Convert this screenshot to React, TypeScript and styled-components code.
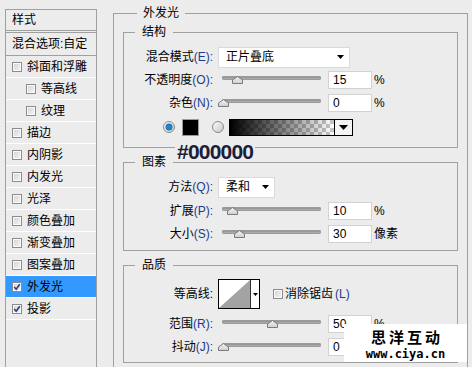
import React from 'react';
import styled, { createGlobalStyle } from 'styled-components';

const GlobalStyle = createGlobalStyle`
	html, body {
		margin: 0;
		padding: 0;
		background: #ececec;
		overflow: hidden;
	}
	body {
		font-family: "Liberation Sans", "Noto Sans CJK SC", sans-serif;
		font-size: 12px;
		color: #000;
	}
`;

const PageStyleC = styled.div`
	position: relative;
	display: flex;
	align-items: flex-start;
	width: 472px;
	height: 367px;
	box-sizing: border-box;
	padding: 5px 0 0 5px;
	overflow: hidden;
`;

/* ---------- left list ---------- */

const SidebarStyleC = styled.div`
	flex-shrink: 0;
	margin-top: 4px;
	width: 92px;
	height: 380px;
	box-sizing: border-box;
	border: 1px solid #a0a0a0;
	line-height: 16px;
`;

const SideHeaderStyleC = styled.div`
	height: 20px;
	line-height: 20px;
	padding-left: 6px;
	border-bottom: 3px double #a0a0a0;
`;

const SideBlendStyleC = styled.div`
	height: 22px;
	line-height: 22px;
	padding-left: 6px;
	border-bottom: 1px solid #a0a0a0;
	white-space: nowrap;
	overflow: hidden;
`;

const SideItemStyleC = styled.div<{ $indent?: boolean; $active?: boolean }>`
	display: flex;
	align-items: center;
	gap: 5px;
	height: 21px;
	padding-left: ${(p) => (p.$indent ? 20 : 6)}px;
	border-bottom: 1px solid #fff;
	background: ${(p) => (p.$active ? '#3399ff' : 'transparent')};
	white-space: nowrap;
`;

const CheckBoxStyleC = styled.span`
	display: inline-flex;
	align-items: center;
	justify-content: center;
	flex-shrink: 0;
	width: 10px;
	height: 10px;
	box-sizing: border-box;
	border: 1px solid #8c8c8c;
	box-shadow: inset 0 0 0 1px #fafafa;
	background: linear-gradient(135deg, #d2d2d2, #f6f6f6);
`;

/* ---------- right panel ---------- */

const MainStyleC = styled.div`
	flex-shrink: 0;
	margin-left: 16px;
	width: 355px;
`;

const OuterSetStyleC = styled.fieldset`
	margin: 0;
	padding: 3px 9px 8px;
	min-width: 0;
	border: 1px solid #a0a0a0;
`;

const OuterLegendStyleC = styled.legend`
	margin-left: 14px;
	padding: 0 6px;
	line-height: 16px;
`;

const GroupStyleC = styled.fieldset<{ $gap?: number; $bottom?: number }>`
	position: relative;
	margin: ${(p) => p.$gap ?? 0}px 0 0;
	padding: 6px 0 ${(p) => p.$bottom ?? 6}px;
	min-width: 0;
	border: 1px solid #a0a0a0;
`;

const LegendStyleC = styled.legend`
	margin-left: 11px;
	padding: 0 7px;
	line-height: 16px;
`;

const RowStyleC = styled.div<{ $h?: number; $top?: number }>`
	display: flex;
	align-items: center;
	height: ${(p) => p.$h ?? 23}px;
	margin-top: ${(p) => p.$top ?? 0}px;
	line-height: 16px;
`;

const FieldLabelStyleC = styled.span`
	flex-shrink: 0;
	width: 89px;
	margin-right: 5px;
	text-align: right;
	white-space: nowrap;
`;

const KeyStyleC = styled.span`
	color: #1d3a8c;
`;

const SelectStyleC = styled.div<{ $w: number }>`
	display: flex;
	align-items: center;
	justify-content: space-between;
	width: ${(p) => p.$w}px;
	height: 21px;
	box-sizing: border-box;
	padding: 0 5px 0 7px;
	background: #fff;
	border: 1px solid #dadada;
`;

const SliderBoxStyleC = styled.div`
	flex-shrink: 0;
	width: 110px;
	padding-left: 4px;
	box-sizing: border-box;
`;

const TrackStyleC = styled.div`
	position: relative;
	width: 99px;
	height: 4px;
	margin-bottom: 3px;
	border-radius: 2px;
	background: linear-gradient(#7e7e7e, #c4c4c4);
	box-shadow: inset 0 0 0 1px #9a9a9a;
`;

const ThumbStyleC = styled.svg`
	position: absolute;
	top: 0;
	margin-left: -5px;
`;

const NumInputStyleC = styled.div`
	flex-shrink: 0;
	width: 44px;
	height: 18px;
	box-sizing: border-box;
	padding-left: 4px;
	line-height: 17px;
	background: #fff;
	border: 1px solid #d2d2d2;
`;

const UnitStyleC = styled.span`
	margin-left: 2px;
`;

const ColorRowStyleC = styled.div`
	position: relative;
	display: flex;
	align-items: center;
	height: 22px;
	margin-top: 2px;
	padding-left: 39px;
`;

const SwatchStyleC = styled.div`
	width: 17px;
	height: 17px;
	box-sizing: border-box;
	margin: 0 13px 0 7px;
	border: 1px solid #9a9a9a;
	background: #000;
`;

const GradientBoxStyleC = styled.div`
	display: flex;
	width: 124px;
	height: 17px;
	margin-left: 5px;
	box-sizing: border-box;
	border: 1px solid #000;
`;

const GradientStripStyleC = styled.div`
	flex: 1;
	background:
		linear-gradient(to right, #000, rgba(0, 0, 0, 0)),
		repeating-conic-gradient(#c6c6c6 0 25%, #fff 0 50%) 0 0 / 8px 8px;
`;

const ArrowCellStyleC = styled.div`
	display: flex;
	align-items: center;
	justify-content: center;
	width: 17px;
	border-left: 1px solid #000;
	background: #f4f4f4;
`;

const HexNoteStyleC = styled.div`
	position: absolute;
	left: 51px;
	top: 25px;
	padding: 0 2px;
	background: #ececec;
	color: #1b1e3a;
	font-family: "Liberation Sans", sans-serif;
	font-weight: bold;
	font-size: 21px;
	letter-spacing: -0.8px;
	line-height: 22px;
`;

const ContourBoxStyleC = styled.div`
	display: flex;
	width: 42px;
	height: 30px;
	box-sizing: border-box;
	border: 1px solid #000;
	background: #fff;
`;

const ContourArrowStyleC = styled.div`
	display: flex;
	align-items: center;
	justify-content: center;
	flex: 1;
	border-left: 1px solid #333;
`;

const InlineCheckStyleC = styled.label`
	display: flex;
	align-items: center;
	gap: 2px;
	margin-left: 13px;
	white-space: nowrap;
`;

const WatermarkStyleC = styled.div`
	position: absolute;
	left: 344px;
	top: 324px;
	width: 123px;
	height: 38px;
	display: flex;
	flex-direction: column;
	align-items: center;
	padding-top: 5px;
	box-sizing: border-box;
	background: #fff;
`;

const WatermarkTitleStyleC = styled.div`
	font-family: "Noto Sans CJK SC", sans-serif;
	font-weight: bold;
	font-size: 15px;
	letter-spacing: 3px;
	line-height: 15px;
	padding-left: 3px;
`;

const WatermarkUrlStyleC = styled.div`
	margin-top: 5px;
	font-family: "DejaVu Sans Mono", monospace;
	font-weight: bold;
	font-size: 12px;
	line-height: 11px;
`;

/* ---------- small drawings ---------- */

function CheckBox({ checked }: { checked?: boolean }) {
	return (
		<CheckBoxStyleC>
			{checked && (
				<svg width="8" height="8" viewBox="0 0 8 8">
					<path d="M1.2 4 L3.2 6.2 L6.8 1.2" fill="none" stroke="#2b3d88" strokeWidth="1.6" />
				</svg>
			)}
		</CheckBoxStyleC>
	);
}

function DownArrow({ w = 7 }: { w?: number }) {
	return (
		<svg width={w} height={Math.ceil(w / 2)} viewBox={`0 0 ${w} ${Math.ceil(w / 2)}`}>
			<polygon points={`0,0 ${w},0 ${w / 2},${Math.ceil(w / 2)}`} fill="#000" />
		</svg>
	);
}

function Radio({ on, id }: { on?: boolean; id: string }) {
	return (
		<svg width="12" height="12" viewBox="0 0 12 12">
			<defs>
				<linearGradient id={id} x1="0" y1="0" x2="1" y2="1">
					<stop offset="0" stopColor="#ffffff" />
					<stop offset="1" stopColor="#c4c4c4" />
				</linearGradient>
			</defs>
			<circle cx="6" cy="6" r="5.5" fill={`url(#${id})`} stroke="#8a8a8a" />
			{on && <circle cx="6" cy="6" r="3.2" fill="#1a86cf" stroke="#0d5f9c" strokeWidth="0.6" />}
		</svg>
	);
}

function Slider({ pos }: { pos: number }) {
	return (
		<SliderBoxStyleC>
			<TrackStyleC>
				<ThumbStyleC width="11" height="8" viewBox="0 0 11 8" style={{ left: `${pos}%` }}>
					<defs>
						<linearGradient id="thumbfill" x1="0" y1="0" x2="0" y2="1">
							<stop offset="0" stopColor="#f4f4f4" />
							<stop offset="1" stopColor="#cfcfcf" />
						</linearGradient>
					</defs>
					<polygon points="0.5,7.5 0.5,4 5.5,0.5 10.5,4 10.5,7.5" fill="url(#thumbfill)" stroke="#7a7a7a" />
				</ThumbStyleC>
			</TrackStyleC>
		</SliderBoxStyleC>
	);
}

interface ISliderRow {
	name: string;
	keyName: string;
	pos: number;
	value: string;
	unit?: string;
	top?: number;
}

function SliderRow({ name, keyName, pos, value, unit, top }: ISliderRow) {
	return (
		<RowStyleC $top={top}>
			<FieldLabelStyleC>
				{name}
				<KeyStyleC>({keyName}):</KeyStyleC>
			</FieldLabelStyleC>
			<Slider pos={pos} />
			<NumInputStyleC>{value}</NumInputStyleC>
			{unit && <UnitStyleC>{unit}</UnitStyleC>}
		</RowStyleC>
	);
}

const styleItems = [
	{ name: '斜面和浮雕' },
	{ name: '等高线', indent: true },
	{ name: '纹理', indent: true },
	{ name: '描边' },
	{ name: '内阴影' },
	{ name: '内发光' },
	{ name: '光泽' },
	{ name: '颜色叠加' },
	{ name: '渐变叠加' },
	{ name: '图案叠加' },
	{ name: '外发光', checked: true, active: true },
	{ name: '投影', checked: true },
];

function App() {
	return (
		<PageStyleC>
			<GlobalStyle />
			<SidebarStyleC>
				<SideHeaderStyleC>样式</SideHeaderStyleC>
				<SideBlendStyleC>混合选项:自定</SideBlendStyleC>
				{styleItems.map((item) => (
					<SideItemStyleC key={item.name} $indent={item.indent} $active={item.active}>
						<CheckBox checked={item.checked} />
						{item.name}
					</SideItemStyleC>
				))}
			</SidebarStyleC>

			<MainStyleC>
				<OuterSetStyleC>
					<OuterLegendStyleC>外发光</OuterLegendStyleC>

					<GroupStyleC $bottom={9}>
						<LegendStyleC>结构</LegendStyleC>
						<RowStyleC $h={22}>
							<FieldLabelStyleC>
								混合模式<KeyStyleC>(E):</KeyStyleC>
							</FieldLabelStyleC>
							<SelectStyleC $w={132}>
								正片叠底
								<DownArrow />
							</SelectStyleC>
						</RowStyleC>
						<SliderRow name="不透明度" keyName="O" pos={15} value="15" unit="%" />
						<SliderRow name="杂色" keyName="N" pos={1} value="0" unit="%" />
						<ColorRowStyleC>
							<Radio on id="radioOn" />
							<SwatchStyleC />
							<Radio id="radioOff" />
							<GradientBoxStyleC>
								<GradientStripStyleC />
								<ArrowCellStyleC>
									<DownArrow w={9} />
								</ArrowCellStyleC>
							</GradientBoxStyleC>
							<HexNoteStyleC>#000000</HexNoteStyleC>
						</ColorRowStyleC>
					</GroupStyleC>

					<GroupStyleC $gap={6} $bottom={5}>
						<LegendStyleC>图素</LegendStyleC>
						<RowStyleC $h={22}>
							<FieldLabelStyleC>
								方法<KeyStyleC>(Q):</KeyStyleC>
							</FieldLabelStyleC>
							<SelectStyleC $w={57}>
								柔和
								<DownArrow />
							</SelectStyleC>
						</RowStyleC>
						<SliderRow name="扩展" keyName="P" pos={10} value="10" unit="%" top={1} />
						<SliderRow name="大小" keyName="S" pos={17} value="30" unit="像素" />
					</GroupStyleC>

					<GroupStyleC $gap={6} $bottom={4}>
						<LegendStyleC>品质</LegendStyleC>
						<RowStyleC $h={30}>
							<FieldLabelStyleC>等高线:</FieldLabelStyleC>
							<ContourBoxStyleC>
								<svg width="31" height="28" viewBox="0 0 31 28">
									<polygon points="0,28 31,0 31,28" fill="#a3a3a3" />
								</svg>
								<ContourArrowStyleC>
									<DownArrow w={5} />
								</ContourArrowStyleC>
							</ContourBoxStyleC>
							<InlineCheckStyleC>
								<CheckBox />
								消除锯齿<KeyStyleC>(L)</KeyStyleC>
							</InlineCheckStyleC>
						</RowStyleC>
						<SliderRow name="范围" keyName="R" pos={50} value="50" unit="%" top={3} />
						<SliderRow name="抖动" keyName="J" pos={1} value="0" />
					</GroupStyleC>
				</OuterSetStyleC>
			</MainStyleC>

			<WatermarkStyleC>
				<WatermarkTitleStyleC>思洋互动</WatermarkTitleStyleC>
				<WatermarkUrlStyleC>www.ciya.cn</WatermarkUrlStyleC>
			</WatermarkStyleC>
		</PageStyleC>
	);
}

export default App;
